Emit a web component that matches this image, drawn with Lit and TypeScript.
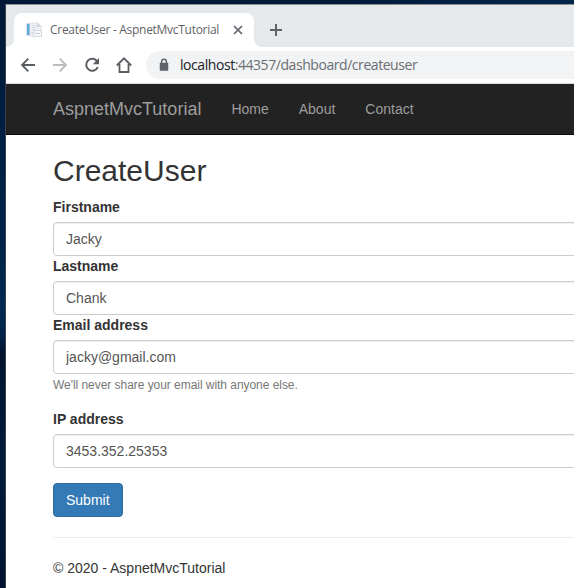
import { LitElement, html, css } from "lit";
import { customElement } from "lit/decorators.js";

@customElement("app-root")
export class AppRoot extends LitElement {
  static styles = css`
    :host {
      display: flex;
      box-sizing: border-box;
      width: 100vw;
      height: 100vh;
      overflow: hidden;
      padding: 4px 0 0 5px;
      background:
        linear-gradient(90deg, #001836, #001a3a 60%, #00264c) 0 0 / 100% 4px no-repeat,
        linear-gradient(#001836 0%, #001f42 22%, #002145 28%, #00254c 45%, #002a52 53%, #002347 57%, #00132e 60%, #001733 66%, #001c3a 80%, #001330 100%);
      font: 14px/20px "Liberation Sans", Arial, sans-serif;
      color: #333;
    }
    .window {
      flex: 1;
      min-width: 0;
      display: flex;
      flex-direction: column;
      background: #fff;
      border-top: 1px solid #8c9094;
      border-left: 1px solid #37404b;
    }
    .strip {
      flex: none;
      height: 42px;
      box-sizing: border-box;
      padding: 8px 0 0 8px;
      display: flex;
      background: #e5e9ec;
    }
    .tab {
      position: relative;
      width: 240px;
      box-sizing: border-box;
      padding: 0 11px 0 12px;
      display: flex;
      align-items: center;
      background: #fff;
      border-radius: 8px 8px 0 0;
      font: 12px/16px "Open Sans", "Noto Sans", sans-serif;
      color: #5f6368;
    }
    .tab::before,
    .tab::after {
      content: "";
      position: absolute;
      bottom: 0;
      width: 8px;
      height: 8px;
    }
    .tab::before {
      left: -8px;
      background: radial-gradient(circle at 0 0, transparent 7.5px, #fff 8.5px);
    }
    .tab::after {
      right: -8px;
      background: radial-gradient(circle at 100% 0, transparent 7.5px, #fff 8.5px);
    }
    .tab-title {
      flex: 1;
      margin-left: 8px;
      white-space: nowrap;
      letter-spacing: -0.29px;
    }
    svg {
      display: block;
      flex: none;
    }
    .plus {
      margin: 10px 0 0 15px;
    }
    .toolbar {
      flex: none;
      height: 37px;
      box-sizing: border-box;
      padding: 4px 0 4px 14px;
      display: flex;
      align-items: center;
      gap: 16px;
      border-bottom: 1px solid #dadce0;
    }
    .address {
      flex: 1;
      height: 28px;
      margin-left: -2px;
      padding-left: 10px;
      display: flex;
      align-items: center;
      background: #f1f3f4;
      border-radius: 14px 0 0 14px;
      font: 14px/20px "Open Sans", "Noto Sans", sans-serif;
      color: #6a6e72;
    }
    .url {
      margin-left: 8px;
      white-space: nowrap;
      letter-spacing: -0.44px;
    }
    .host {
      color: #202124;
    }
    .navbar {
      flex: none;
      height: 51px;
      box-sizing: border-box;
      padding: 15px 0 0 47px;
      display: flex;
      gap: 30px;
      background: #222;
      border-bottom: 1px solid #080808;
      color: #9d9d9d;
    }
    .brand {
      font-size: 18px;
    }
    .page {
      padding: 19px 0 0 47px;
    }
    h2 {
      margin: 0 0 10px;
      font-size: 30px;
      line-height: 33px;
      font-weight: 400;
    }
    label {
      display: block;
      margin-bottom: 5px;
      font-weight: 700;
    }
    input {
      display: block;
      box-sizing: border-box;
      width: calc(100% + 12px);
      height: 34px;
      padding: 6px 12px;
      border: 1px solid #ccc;
      border-radius: 4px;
      background: #fff;
      box-shadow: inset 0 1px 1px rgba(0, 0, 0, 0.075);
      font: inherit;
      color: #555;
    }
    .help {
      height: 20px;
      margin-bottom: 15px;
      font-size: 12px;
      line-height: 23px;
      letter-spacing: -0.045px;
      color: #777;
    }
    button {
      display: block;
      height: 34px;
      margin: 15px 0 20px;
      padding: 6px 12px;
      box-sizing: border-box;
      border: 1px solid #2e6da4;
      border-radius: 4px;
      background: #337ab7;
      color: #fff;
      font: inherit;
    }
    footer {
      padding-top: 20px;
      border-top: 1px solid #eee;
    }
  `;

  private field(id: string, label: string, value: string) {
    return html`<label for=${id}>${label}</label><input id=${id} .value=${value} />`;
  }

  render() {
    return html`
      <div class="window">
        <div class="strip">
          <div class="tab">
            <svg width="16" height="16" viewBox="0 0 16 16">
              <path d="M4 1h8l3 3v10H4z" fill="#f1f2f6" stroke="#dcdfe6" />
              <path d="M0 1h4v13H0z" fill="#d3e3ef" />
              <path d="M1 2h2.500v11H1z" fill="#62a9d6" />
              <path d="M6 3.500h4M6 5.500h4M6 7.500h3M5 10.500h2" stroke="#d5d8e2" />
              <path d="M11 1v4h4z" fill="#d0d4dd" />
              <path d="M7.500 8.500h8v6h-8z" fill="#f7f8fb" stroke="#d3d7e0" />
              <path d="M9 11.500h5" stroke="#c6cbd8" />
            </svg>
            <div class="tab-title">CreateUser - AspnetMvcTutorial</div>
            <svg width="10" height="10" viewBox="0 0 10 10">
              <path d="M1 1l8 8M9 1L1 9" stroke="#5f6368" stroke-width="1.700" />
            </svg>
          </div>
          <svg class="plus" width="14" height="14" viewBox="0 0 14 14">
            <path d="M7 1v12M1 7h12" stroke="#5f6368" stroke-width="2" />
          </svg>
        </div>
        <div class="toolbar">
          <svg width="16" height="16" viewBox="0 0 16 16">
            <path d="M15 8H2.500M8.300 1.700L2 8l6.300 6.300" fill="none" stroke="#5a5e63" stroke-width="1.800" />
          </svg>
          <svg width="16" height="16" viewBox="0 0 16 16">
            <path d="M1 8h12.500M7.700 1.700L14 8l-6.300 6.300" fill="none" stroke="#babcbe" stroke-width="1.800" />
          </svg>
          <svg width="16" height="16" viewBox="0 0 16 16">
            <path d="M13.300 4.600A6 6 0 1 0 13.800 10" fill="none" stroke="#5a5e63" stroke-width="2" />
            <path d="M15 1v6.200H8.800z" fill="#5a5e63" />
          </svg>
          <svg width="16" height="16" viewBox="0 0 16 16">
            <path d="M.8 8.500L8 1.300l7.200 7.200M3.500 7v8h9V7" fill="none" stroke="#5a5e63" stroke-width="1.800" />
          </svg>
          <div class="address">
            <svg width="16" height="16" viewBox="0 0 16 16">
              <path d="M4 6h8v7.500H4z" fill="#5f6368" stroke="#5f6368" stroke-width=".5" stroke-linejoin="round" />
              <path d="M5.600 6V4.600a2.400 2.400 0 0 1 4.800 0V6" fill="none" stroke="#5f6368" stroke-width="1.400" />
            </svg>
            <span class="url"><span class="host">localhost</span>:44357/dashboard/createuser</span>
          </div>
        </div>
        <nav class="navbar">
          <span class="brand">AspnetMvcTutorial</span>
          <span>Home</span>
          <span>About</span>
          <span>Contact</span>
        </nav>
        <main class="page">
          <h2>CreateUser</h2>
          ${this.field("firstname", "Firstname", "Jacky")}
          ${this.field("lastname", "Lastname", "Chank")}
          ${this.field("email", "Email address", "jacky@gmail.com")}
          <div class="help">We'll never share your email with anyone else.</div>
          ${this.field("ip", "IP address", "3453.352.25353")}
          <button>Submit</button>
          <footer>© 2020 - AspnetMvcTutorial</footer>
        </main>
      </div>
    `;
  }
}
